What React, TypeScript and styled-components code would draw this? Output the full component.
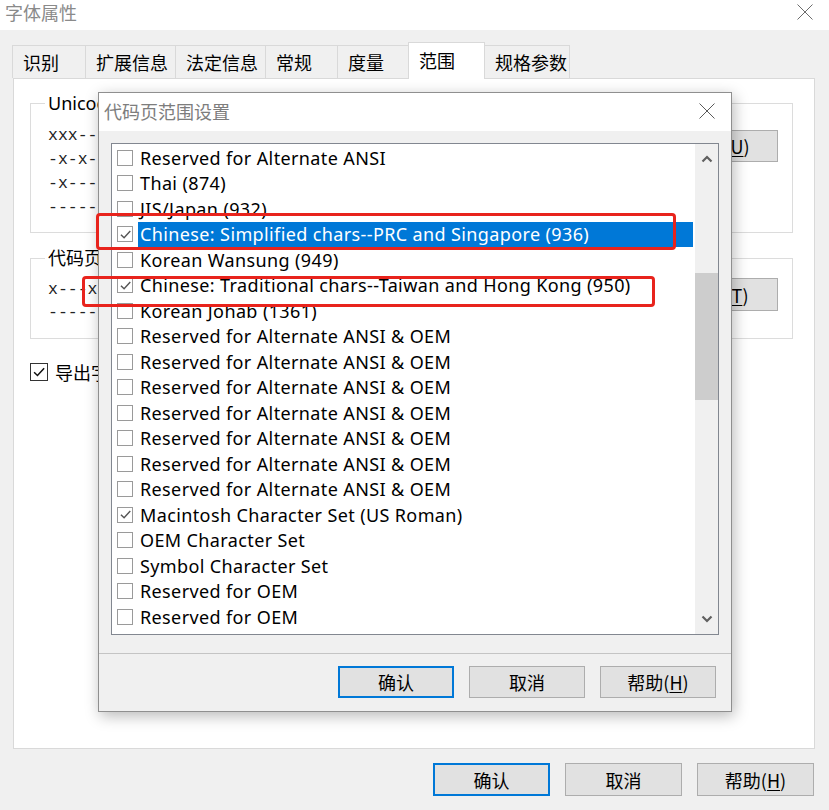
import React from "react";
import styled, { createGlobalStyle, css } from "styled-components";

const UI = `"Noto Sans", "Noto Sans CJK SC", sans-serif`;
const CJK = `"Noto Sans CJK SC", "Noto Sans", sans-serif`;

const GlobalStyle = createGlobalStyle`
  html, body { margin: 0; padding: 0; background: #fff; }
  body { font-family: ${UI}; color: #000; }
  * { box-sizing: border-box; }
`;

const Window = styled.div`
  position: relative;
  width: 829px;
  height: 810px;
  display: flex;
  flex-direction: column;
  background: #f0f0f0;
  overflow: hidden;
`;

const TitleBar = styled.div`
  height: 30px;
  flex: none;
  background: #fff;
  display: flex;
  align-items: flex-start;
  justify-content: space-between;
  padding: 0 16px 0 5px;
`;

const TitleText = styled.div<{ $tone?: string }>`
  font-family: ${CJK};
  font-size: 18px;
  line-height: 24px;
  color: ${(p) => p.$tone || "#8a8a8a"};
`;

const CloseBtn = styled.div<{ $top?: number }>`
  width: 16px;
  height: 16px;
  margin-top: ${(p) => p.$top ?? 4}px;
  display: flex;
`;

const TabStrip = styled.div`
  height: 36px;
  margin: 12px 0 0 13px;
  display: flex;
  align-items: flex-end;
  flex: none;
  position: relative;
  z-index: 1;
`;

const Tab = styled.div<{ $w: number; $active?: boolean }>`
  width: ${(p) => p.$w}px;
  height: 33px;
  padding-left: 10px;
  display: flex;
  align-items: center;
  font-family: ${CJK};
  font-size: 18px;
  background: #f0f0f0;
  border: 1px solid #d9d9d9;
  border-bottom: none;
  margin-left: -1px;
  ${(p) =>
    p.$active &&
    css`
      height: 37px;
      margin-bottom: -1px;
      background: #fff;
      padding-bottom: 3px;
    `}
`;

const Panel = styled.div`
  flex: 1;
  margin: 0 14px 0 13px;
  background: #fff;
  border: 1px solid #d9d9d9;
  padding: 12px 21px 0 16px;
  display: flex;
  flex-direction: column;
`;

const Group = styled.fieldset<{ $pt: number; $pb: number; $gap?: number }>`
  margin: ${(p) => p.$gap ?? 0}px 0 0 0;
  border: 1px solid #dcdcdc;
  padding: ${(p) => p.$pt}px 14px ${(p) => p.$pb}px 17px;
  display: flex;
  align-items: flex-start;
  min-width: 0;
`;

const Legend = styled.legend`
  margin-left: -3px;
  padding: 0 3px;
  font-family: ${UI};
  font-size: 18px;
  line-height: 24px;
`;

const BitLines = styled.div<{ $lh: number }>`
  flex: 1;
  font-family: "Liberation Mono", monospace;
  font-size: 16.5px;
  line-height: ${(p) => p.$lh}px;
  color: #222;
  white-space: pre;
`;

const Button = styled.div<{ $w: number; $h?: number; $primary?: boolean; $top?: number }>`
  width: ${(p) => p.$w}px;
  height: ${(p) => p.$h ?? 32}px;
  margin-top: ${(p) => p.$top ?? 0}px;
  flex: none;
  background: #e1e1e1;
  border: 1px solid #adadad;
  display: flex;
  align-items: center;
  justify-content: center;
  font-family: ${CJK};
  font-size: 18px;
  color: #000;
  ${(p) =>
    p.$primary &&
    css`
      border: 2px solid #0078d7;
    `}
  u { text-underline-offset: 2px; }
`;

const CheckRow = styled.div`
  margin-top: 20px;
  display: flex;
  align-items: center;
  gap: 7px;
  font-family: ${CJK};
  font-size: 18px;
`;

const Footer = styled.div<{ $gap: number; $pad: string }>`
  display: flex;
  justify-content: flex-end;
  gap: ${(p) => p.$gap}px;
  padding: ${(p) => p.$pad};
  flex: none;
`;

/* ---------- modal dialog ---------- */

const Dialog = styled.div`
  position: absolute;
  left: 98px;
  top: 92px;
  width: 634px;
  height: 620px;
  background: #f0f0f0;
  border: 1px solid #8f8f8f;
  box-shadow: 2px 4px 14px rgba(0, 0, 0, 0.28);
  display: flex;
  flex-direction: column;
  z-index: 5;
`;

const DialogTitle = styled.div`
  height: 38px;
  flex: none;
  background: #fff;
  display: flex;
  align-items: center;
  justify-content: space-between;
  padding: 0 16px 3px 5px;
`;

const DialogBody = styled.div`
  flex: 1;
  padding: 12px 12px 18px 12px;
  display: flex;
  flex-direction: column;
`;

const ListBox = styled.div`
  height: 492px;
  background: #fff;
  border: 1px solid #828790;
  display: flex;
`;

const Items = styled.div`
  flex: 1;
  padding: 1px 2px 0 5px;
  display: flex;
  flex-direction: column;
`;

const Row = styled.div`
  height: 25.5px;
  display: flex;
  align-items: center;
  flex: none;
`;

const Label = styled.div<{ $selected?: boolean }>`
  flex: 1;
  height: 25px;
  margin-left: 5px;
  padding-left: 2px;
  display: flex;
  align-items: center;
  font-family: ${UI};
  font-size: 18px;
  letter-spacing: 0.38px;
  white-space: nowrap;
  color: #000;
  ${(p) =>
    p.$selected &&
    css`
      background: #0078d7;
      color: #fff;
    `}
`;

const Box = styled.div<{ $size: number; $border: string }>`
  width: ${(p) => p.$size}px;
  height: ${(p) => p.$size}px;
  flex: none;
  border: 1px solid ${(p) => p.$border};
  background: #fff;
  display: flex;
  align-items: center;
  justify-content: center;
`;

const ScrollBar = styled.div`
  width: 23px;
  flex: none;
  background: #f0f0f0;
  display: flex;
  flex-direction: column;
`;

const Arrow = styled.div`
  height: 30px;
  display: flex;
  align-items: center;
  justify-content: center;
  flex: none;
`;

const Track = styled.div`
  flex: 1;
  display: flex;
  flex-direction: column;
`;

const Thumb = styled.div<{ $offset: number; $len: number }>`
  margin-top: ${(p) => p.$offset}px;
  height: ${(p) => p.$len}px;
  background: #cdcdcd;
`;

const DialogFooter = styled(Footer)`
  border-top: 1px solid #c4c4c4;
`;

const Mark = styled.div<{ $left: number; $top: number; $w: number; $h: number }>`
  position: absolute;
  left: ${(p) => p.$left}px;
  top: ${(p) => p.$top}px;
  width: ${(p) => p.$w}px;
  height: ${(p) => p.$h}px;
  border: 3px solid #e8231c;
  border-radius: 4px;
  z-index: 10;
  pointer-events: none;
`;

/* ---------- icons ---------- */

const XIcon = ({ color = "#6b6b6b" }: { color?: string }) => (
  <svg width="16" height="16" viewBox="0 0 16 16">
    <path d="M0.5 0.5 L15.5 15.5 M15.5 0.5 L0.5 15.5" stroke={color} strokeWidth="1" fill="none" />
  </svg>
);

const Chevron = ({ up }: { up?: boolean }) => (
  <svg width="12" height="8" viewBox="0 0 12 8">
    <path
      d={up ? "M1.5 6.5 L6 2 L10.5 6.5" : "M1.5 1.5 L6 6 L10.5 1.5"}
      stroke="#606060"
      strokeWidth="2.2"
      fill="none"
    />
  </svg>
);

const Tick = ({ color, size }: { color: string; size: number }) => (
  <svg width={size} height={size} viewBox="0 0 12 12">
    <path d="M1.8 6.2 L4.7 9 L10.4 2.8" stroke={color} strokeWidth="1.3" fill="none" />
  </svg>
);

const CheckBox = ({ checked, classic }: { checked?: boolean; classic?: boolean }) =>
  classic ? (
    <Box $size={18} $border="#333">
      {checked && <Tick color="#111" size={14} />}
    </Box>
  ) : (
    <Box $size={16} $border="#9a9a9a">
      {checked && <Tick color="#555" size={13} />}
    </Box>
  );

/* ---------- data ---------- */

const tabs = [
  { label: "识别", w: 74 },
  { label: "扩展信息", w: 91 },
  { label: "法定信息", w: 91 },
  { label: "常规", w: 73 },
  { label: "度量", w: 72 },
  { label: "范围", w: 77, active: true },
  { label: "规格参数", w: 86 },
];

const ALT = "Reserved for Alternate ANSI & OEM";
const rows: { text: string; checked?: boolean; selected?: boolean }[] = [
  { text: "Reserved for Alternate ANSI" },
  { text: "Thai (874)" },
  { text: "JIS/Japan (932)" },
  { text: "Chinese: Simplified chars--PRC and Singapore (936)", checked: true, selected: true },
  { text: "Korean Wansung (949)" },
  { text: "Chinese: Traditional chars--Taiwan and Hong Kong (950)", checked: true },
  { text: "Korean Johab (1361)" },
  { text: ALT },
  { text: ALT },
  { text: ALT },
  { text: ALT },
  { text: ALT },
  { text: ALT },
  { text: ALT },
  { text: "Macintosh Character Set (US Roman)", checked: true },
  { text: "OEM Character Set" },
  { text: "Symbol Character Set" },
  { text: "Reserved for OEM" },
  { text: "Reserved for OEM" },
];

const unicodeBits = ["xxx--", "-x-x-", "-x---", "-----"];
const codeBits = ["x---x", "-----"];

export default function App() {
  return (
    <>
      <GlobalStyle />
      <Window>
        <TitleBar>
          <TitleText>字体属性</TitleText>
          <CloseBtn>
            <XIcon />
          </CloseBtn>
        </TitleBar>

        <TabStrip>
          {tabs.map((t) => (
            <Tab key={t.label} $w={t.w} $active={t.active}>
              {t.label}
            </Tab>
          ))}
        </TabStrip>

        <Panel>
          <Group $pt={9} $pb={12}>
            <Legend>Unicode</Legend>
            <BitLines $lh={24}>{unicodeBits.join("\n")}</BitLines>
            <Button $w={118} $top={6}>
              选择(<u>U</u>)
            </Button>
          </Group>
          <Group $pt={8} $pb={14} $gap={13}>
            <Legend>代码页</Legend>
            <BitLines $lh={23}>{codeBits.join("\n")}</BitLines>
            <Button $w={118} $top={0} $h={33}>
              选择(<u>T</u>)
            </Button>
          </Group>
          <CheckRow>
            <CheckBox classic checked />
            <span>导出字</span>
          </CheckRow>
        </Panel>

        <Footer $gap={15} $pad="14px 15px 14px 0">
          <Button $w={117} $h={33} $primary>
            确认
          </Button>
          <Button $w={117} $h={33}>
            取消
          </Button>
          <Button $w={117} $h={33}>
            帮助(<u>H</u>)
          </Button>
        </Footer>

        <Dialog>
          <DialogTitle>
            <TitleText $tone="#7d7d7d">代码页范围设置</TitleText>
            <CloseBtn $top={0}>
              <XIcon color="#5a5a5a" />
            </CloseBtn>
          </DialogTitle>
          <DialogBody>
            <ListBox>
              <Items>
                {rows.map((r, i) => (
                  <Row key={i}>
                    <CheckBox checked={r.checked} />
                    <Label $selected={r.selected}>{r.text}</Label>
                  </Row>
                ))}
              </Items>
              <ScrollBar>
                <Arrow>
                  <Chevron up />
                </Arrow>
                <Track>
                  <Thumb $offset={99} $len={127} />
                </Track>
                <Arrow>
                  <Chevron />
                </Arrow>
              </ScrollBar>
            </ListBox>
          </DialogBody>
          <DialogFooter $gap={15} $pad="12px 15px 13px 0">
            <Button $w={116} $primary>
              确认
            </Button>
            <Button $w={116}>取消</Button>
            <Button $w={116}>
              帮助(<u>H</u>)
            </Button>
          </DialogFooter>
        </Dialog>

        <Mark $left={96} $top={213} $w={580} $h={37} />
        <Mark $left={82} $top={276} $w={573} $h={31} />
      </Window>
    </>
  );
}
